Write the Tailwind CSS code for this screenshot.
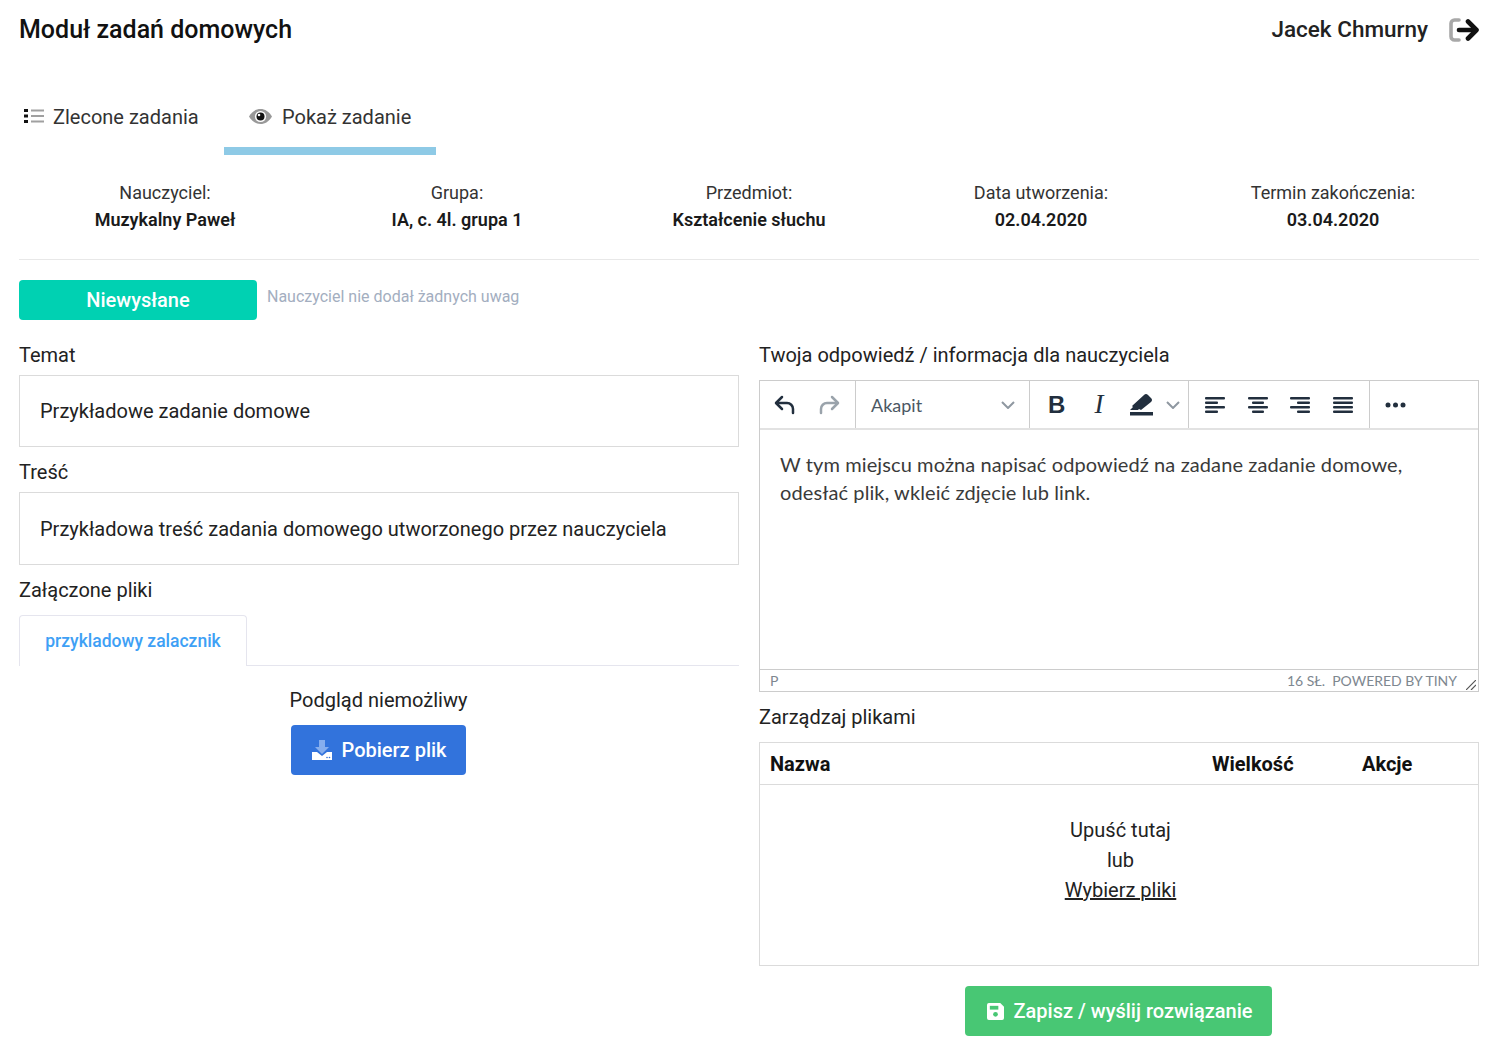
<!DOCTYPE html>
<html>
<head>
    <meta charset="UTF-8">
    <meta name="viewport" content="width=device-width, initial-scale=1.0">
    <title>Moduł zadań domowych</title>
    <script src="https://cdn.jsdelivr.net/npm/@tailwindcss/browser@4"></script>
</head>
<body class="bg-white text-[#1a1a1a] font-['Roboto',sans-serif] h-[1053px] overflow-hidden">
    <div class="px-[19px]">
        <!-- header -->
        <div class="flex justify-between items-center h-[59px]">
            <h1 class="text-[25px] font-medium text-[#111]">Moduł zadań domowych</h1>
            <div class="flex items-center">
                <span class="text-[22.500px] font-medium text-[#222]">Jacek Chmurny</span>
                <svg class="ml-[21px]" width="30" height="24" viewBox="0 0 30 24" fill="none">
                    <path d="M10 2H5.500A3.500 3.500 0 0 0 2 5.500v13A3.500 3.500 0 0 0 5.500 22H10" stroke="#a8a8a8" stroke-width="3.600" stroke-linecap="round"/>
                    <path d="M10 12H26" stroke="#111" stroke-width="4.600" stroke-linecap="round"/>
                    <path d="M19 3.500L27.500 12 19 20.500" stroke="#111" stroke-width="4.600" stroke-linecap="round" stroke-linejoin="round"/>
                </svg>
            </div>
        </div>

        <!-- tabs -->
        <div class="flex mt-[21px] h-[75px] text-[20px] text-[#333]">
            <div class="flex items-start pt-[22px] pl-[5px] w-[205px]">
                <svg class="mt-[6px] mr-[9px]" width="20" height="16" viewBox="0 0 20 16">
                    <path d="M0 1h4v3H0zM0 6.500h4v3H0zM0 12h4v3H0z" fill="#111"/>
                    <path d="M7 1.500h13v2H7zM7 7h13v2H7zM7 12.500h13v2H7z" fill="#a0a0a0"/>
                </svg>
                <span>Zlecone zadania</span>
            </div>
            <div class="w-[212px] h-[75px] border-b-[8px] border-[#8ecae6] flex items-start pt-[22px] pl-[25px]">
                <svg class="mt-[7px] mr-[10px]" width="23" height="15" viewBox="0 0 23 15">
                    <path d="M0 7.500C3 2.500 7 0 11.500 0S20 2.500 23 7.500C20 12.500 16 15 11.500 15S3 12.500 0 7.500z" fill="#999"/>
                    <circle cx="11.500" cy="7.500" r="5.600" fill="#fff"/>
                    <circle cx="11.500" cy="7.500" r="4" fill="#111"/>
                    <circle cx="10" cy="6" r="1.300" fill="#fff"/>
                </svg>
                <span>Pokaż zadanie</span>
            </div>
        </div>

        <!-- info -->
        <div class="grid grid-cols-5 text-center text-[18px] mt-[24px] pb-[26px] border-b border-[#e8e8e8] leading-[27px]">
            <div><p class="text-[#333]">Nauczyciel:</p><p class="font-semibold">Muzykalny Paweł</p></div>
            <div><p class="text-[#333]">Grupa:</p><p class="font-semibold">IA, c. 4l. grupa 1</p></div>
            <div><p class="text-[#333]">Przedmiot:</p><p class="font-semibold">Kształcenie słuchu</p></div>
            <div><p class="text-[#333]">Data utworzenia:</p><p class="font-semibold">02.04.2020</p></div>
            <div><p class="text-[#333]">Termin zakończenia:</p><p class="font-semibold">03.04.2020</p></div>
        </div>

        <!-- status -->
        <div class="flex mt-[20px]">
            <div class="w-[238px] h-[40px] bg-[#00d1b2] text-white rounded text-[20px] font-medium flex items-center justify-center">Niewysłane</div>
            <span class="ml-[10px] mt-[5px] text-[16px] text-[#a3aec0]">Nauczyciel nie dodał żadnych uwag</span>
        </div>

        <div class="grid grid-cols-2 gap-[20px] mt-[20px]">
            <!-- left -->
            <div>
                <p class="text-[20px] leading-[30px] text-[#222]">Temat</p>
                <div class="mt-[5px] h-[72px] border border-[#dbdbdb] px-[20px] flex items-center text-[20px] text-[#222]">Przykładowe zadanie domowe</div>
                <p class="text-[20px] leading-[30px] mt-[10px] text-[#222]">Treść</p>
                <div class="mt-[5px] h-[73px] border border-[#dbdbdb] px-[20px] flex items-center text-[20px] text-[#222]">Przykładowa treść zadania domowego utworzonego przez nauczyciela</div>
                <p class="text-[20px] leading-[30px] mt-[10px] text-[#222]">Załączone pliki</p>
                <div class="mt-[10px] h-[51px] border-b border-[#e5e5ee] flex">
                    <div class="w-[228px] h-[51px] bg-white border border-b-0 border-[#e5e5ee] rounded-t flex items-center justify-center text-[17.500px] font-medium text-[#3ea0f5]">przykladowy zalacznik</div>
                </div>
                <div class="flex flex-col items-center pr-[1px]">
                    <p class="text-[20px] leading-[30px] mt-[19px] text-[#222]">Podgląd niemożliwy</p>
                    <div class="mt-[10px] w-[175px] h-[50px] bg-[#3273dc] rounded text-white text-[20px] font-medium flex items-center justify-center pl-[1px]">
                        <svg class="mr-[10px]" width="20" height="20" viewBox="0 0 20 20">
                            <path d="M7 0h6v7h4l-7 7-7-7h4z" fill="#86aeee"/>
                            <path d="M0 12h5l5 4 5-4h5v8H0z" fill="#fff"/>
                            <circle cx="15" cy="17.500" r=".8" fill="#3273dc"/>
                            <circle cx="17.500" cy="17.500" r=".8" fill="#3273dc"/>
                        </svg>
                        <span>Pobierz plik</span>
                    </div>
                </div>
            </div>

            <!-- right -->
            <div>
                <p class="text-[20px] leading-[30px] text-[#222]">Twoja odpowiedź / informacja dla nauczyciela</p>
                <!-- editor -->
                <div class="mt-[10px] h-[312px] border border-[#ccc] font-['Lato',sans-serif] flex flex-col">
                    <div class="h-[49px] flex border-b-2 border-[#e2e2e2] text-[#222f3e] shrink-0">
                        <div class="w-[96px] h-[47px] border-r border-[#ccc] flex items-center pl-[14px] gap-[22px]">
                            <svg width="22" height="22" viewBox="0 0 22 22" fill="none" stroke="#222f3e" stroke-width="2.500" stroke-linecap="round" stroke-linejoin="round"><path d="M8 3L2 9l6 6"/><path d="M2.500 9H13a6 6 0 0 1 6 6v4"/></svg>
                            <svg width="22" height="22" viewBox="0 0 22 22" fill="none" stroke="#9aa3ab" stroke-width="2.500" stroke-linecap="round" stroke-linejoin="round"><path d="M14 3l6 6-6 6"/><path d="M19.500 9H9a6 6 0 0 0-6 6v4"/></svg>
                        </div>
                        <div class="w-[174px] h-[47px] border-r border-[#ccc] flex items-center justify-between pl-[15px] pr-[14px] text-[18px] text-[#4b5763]">
                            <span class="mt-[1px]">Akapit</span>
                            <svg width="14" height="8" viewBox="0 0 14 8" fill="none" stroke="#8f98a1" stroke-width="2"><path d="M1 1l6 6 6-6"/></svg>
                        </div>
                        <div class="w-[159px] h-[47px] border-r border-[#ccc] flex items-center pl-[18px]">
                            <span class="w-[17px] text-[24px] font-bold font-['Liberation_Sans',sans-serif] leading-none">B</span>
                            <span class="w-[14px] ml-[27px] text-[27px] italic text-center font-['Liberation_Serif',serif] leading-none">I</span>
                            <svg class="ml-[23px]" width="25" height="24" viewBox="0 0 25 24"><path d="M1 17l3-3-1-1L15 2q2-2 4 0l3 3q2 2 0 4L12 17l-2-1-1 1z" fill="#222f3e"/><rect x="1" y="19" width="23" height="3.500" fill="#222f3e"/></svg>
                            <svg class="ml-[12px]" width="14" height="8" viewBox="0 0 14 8" fill="none" stroke="#8f98a1" stroke-width="2"><path d="M1 1l6 6 6-6"/></svg>
                        </div>
                        <div class="w-[181px] h-[47px] border-r border-[#ccc] flex items-center pl-[16px] gap-[22.500px]">
                            <svg width="20" height="18" viewBox="0 0 20 18" fill="#222f3e"><rect y="1" width="20" height="2.400" rx="1"/><rect y="5.500" width="13" height="2.400" rx="1"/><rect y="10" width="20" height="2.400" rx="1"/><rect y="14.500" width="13" height="2.400" rx="1"/></svg>
                            <svg width="20" height="18" viewBox="0 0 20 18" fill="#222f3e"><rect y="1" width="20" height="2.400" rx="1"/><rect x="4" y="5.500" width="12" height="2.400" rx="1"/><rect y="10" width="20" height="2.400" rx="1"/><rect x="4" y="14.500" width="12" height="2.400" rx="1"/></svg>
                            <svg width="20" height="18" viewBox="0 0 20 18" fill="#222f3e"><rect y="1" width="20" height="2.400" rx="1"/><rect x="7" y="5.500" width="13" height="2.400" rx="1"/><rect y="10" width="20" height="2.400" rx="1"/><rect x="7" y="14.500" width="13" height="2.400" rx="1"/></svg>
                            <svg width="20" height="18" viewBox="0 0 20 18" fill="#222f3e"><rect y="1" width="20" height="2.400" rx="1"/><rect y="5.500" width="20" height="2.400" rx="1"/><rect y="10" width="20" height="2.400" rx="1"/><rect y="14.500" width="20" height="2.400" rx="1"/></svg>
                        </div>
                        <div class="flex items-center pl-[15px]">
                            <svg width="21" height="6" viewBox="0 0 21 6" fill="#222f3e"><circle cx="3" cy="3" r="2.500"/><circle cx="10.500" cy="3" r="2.500"/><circle cx="18" cy="3" r="2.500"/></svg>
                        </div>
                    </div>
                    <div class="flex-1 px-[20px] pt-[20px] text-[20px] leading-[28px] tracking-[0.1px] text-[#3a3a3a]">W tym miejscu można napisać odpowiedź na zadane zadanie domowe, odesłać plik, wkleić zdjęcie lub link.</div>
                    <div class="relative h-[22px] border-t border-[#ccc] flex justify-between pl-[10px] pr-[21px] text-[14px] leading-[21px] text-[#7e8790] shrink-0">
                        <span>P</span>
                        <span>16 SŁ. &nbsp;POWERED BY TINY</span>
                        <svg class="absolute right-[2px] bottom-[1px]" width="10" height="10" viewBox="0 0 10 10" stroke="#555" stroke-width="1.200"><path d="M0 10L10 0M5 10l5-5"/></svg>
                    </div>
                </div>

                <p class="text-[20px] leading-[30px] mt-[10px] text-[#222]">Zarządzaj plikami</p>
                <!-- files -->
                <div class="mt-[10px] h-[224px] border border-[#dbdbdb]">
                    <div class="h-[42px] border-b border-[#dbdbdb] flex items-center text-[20px] font-bold text-[#111]">
                        <span class="ml-[10px] w-[442px]">Nazwa</span>
                        <span class="w-[150px]">Wielkość</span>
                        <span>Akcje</span>
                    </div>
                    <div class="text-center text-[20px] leading-[30px] pt-[30px] text-[#222] pl-[3px]">
                        <p>Upuść tutaj</p>
                        <p>lub</p>
                        <p class="underline">Wybierz pliki</p>
                    </div>
                </div>
                <div class="flex justify-center mt-[20px] pr-[1px]">
                    <div class="w-[307px] h-[50px] bg-[#48c774] rounded text-white text-[20px] font-medium flex items-center justify-center pl-[2px]">
                        <svg class="mr-[10px]" width="17" height="17" viewBox="0 0 18 18">
                            <path d="M2 0h12l4 4v12a2 2 0 0 1-2 2H2a2 2 0 0 1-2-2V2a2 2 0 0 1 2-2z" fill="#fff"/>
                            <rect x="3" y="3" width="9" height="4" fill="#48c774"/>
                            <circle cx="9" cy="12" r="2.500" fill="#48c774"/>
                        </svg>
                        <span>Zapisz / wyślij rozwiązanie</span>
                    </div>
                </div>
            </div>
        </div>
    </div>
</body>
</html>
